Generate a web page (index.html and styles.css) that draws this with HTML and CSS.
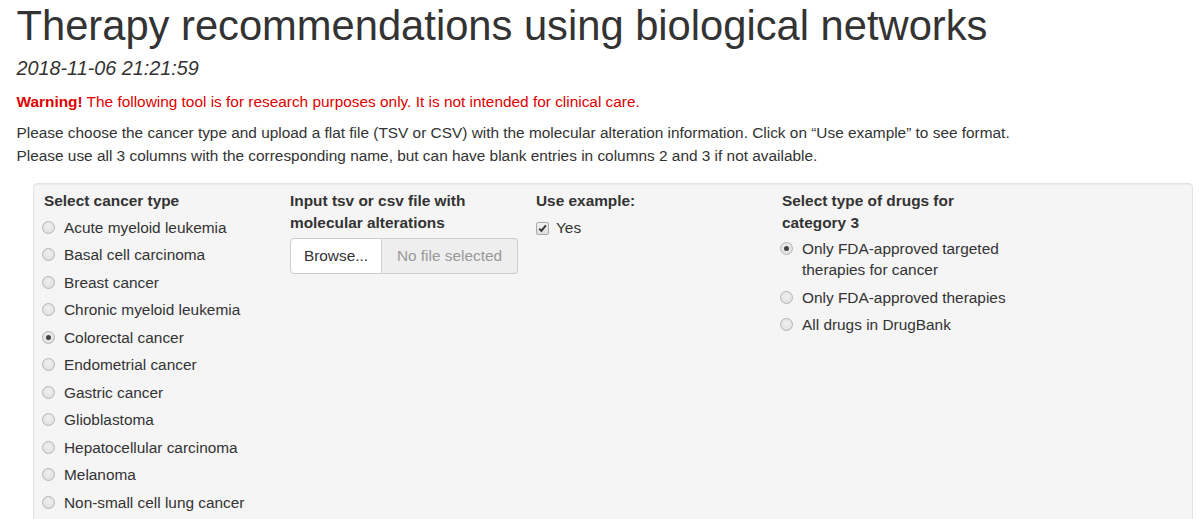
FILE: index.html
```html
<!DOCTYPE html>
<html lang="en">
<head>
<meta charset="utf-8">
<title>Therapy recommendations using biological networks</title>
<link rel="stylesheet" href="styles.css">
</head>
<body>
<div class="page">
  <h1 class="title">Therapy recommendations using biological networks</h1>
  <h4 class="date">2018-11-06 21:21:59</h4>
  <p class="warning"><strong>Warning!</strong> The following tool is for research purposes only. It is not intended for clinical care.</p>
  <p class="intro">Please choose the cancer type and upload a flat file (TSV or CSV) with the molecular alteration information. Click on “Use example” to see format.<br>Please use all 3 columns with the corresponding name, but can have blank entries in columns 2 and 3 if not available.</p>
  <div class="well">
    <div class="cols">
      <div class="col">
        <div class="label">Select cancer type</div>
        <div class="opt"><span class="radio"></span>Acute myeloid leukemia</div>
        <div class="opt"><span class="radio"></span>Basal cell carcinoma</div>
        <div class="opt"><span class="radio"></span>Breast cancer</div>
        <div class="opt"><span class="radio"></span>Chronic myeloid leukemia</div>
        <div class="opt"><span class="radio checked"></span>Colorectal cancer</div>
        <div class="opt"><span class="radio"></span>Endometrial cancer</div>
        <div class="opt"><span class="radio"></span>Gastric cancer</div>
        <div class="opt"><span class="radio"></span>Glioblastoma</div>
        <div class="opt"><span class="radio"></span>Hepatocellular carcinoma</div>
        <div class="opt"><span class="radio"></span>Melanoma</div>
        <div class="opt"><span class="radio"></span>Non-small cell lung cancer</div>
      </div>
      <div class="col">
        <div class="label">Input tsv or csv file with molecular alterations</div>
        <div class="file">
          <span class="browse">Browse...</span>
          <span class="filename">No file selected</span>
        </div>
      </div>
      <div class="col">
        <div class="label">Use example:</div>
        <div class="opt"><span class="check"><svg width="9" height="9" viewBox="0 0 9 9"><path d="M1.2 4.6 L3.4 6.9 L7.9 1.3" fill="none" stroke="#333" stroke-width="1.9"/></svg></span>Yes</div>
      </div>
      <div class="col">
        <div class="label">Select type of drugs for category 3</div>
        <div class="opt"><span class="radio checked"></span><span>Only FDA-approved targeted therapies for cancer</span></div>
        <div class="opt"><span class="radio"></span>Only FDA-approved therapies</div>
        <div class="opt"><span class="radio"></span>All drugs in DrugBank</div>
      </div>
    </div>
  </div>
</div>
</body>
</html>
```
FILE: styles.css
```css
html, body {
  margin: 0;
  padding: 0;
  background: #fff;
}
body {
  font-family: "Liberation Sans", Arial, sans-serif;
  font-size: 15.4px;
  line-height: 22px;
  color: #333;
  overflow: hidden;
}
.page {
  padding: 0 16.5px;
}
.title {
  font-size: 41.7px;
  font-weight: normal;
  line-height: 44px;
  margin: 4px 0 0 0;
  color: #333;
}
.date {
  font-size: 19.8px;
  font-style: italic;
  font-weight: normal;
  line-height: 22px;
  margin: 9px 0 0 0;
}
.warning {
  color: #e00000;
  margin: 12px 0 0 0;
}
.warning strong {
  font-weight: bold;
}
.intro {
  margin: 8px 0 0 0;
  line-height: 23px;
}
.well {
  margin: 16px -9px 0 16.5px;
  background: #f5f5f5;
  border: 1px solid #e3e3e3;
  border-radius: 4px;
  box-shadow: inset 0 1px 1px rgba(0,0,0,0.05);
  padding: 6px 10px 10px 10px;
  height: 400px;
}
.cols {
  display: grid;
  grid-template-columns: 216px 216px 216px 236px;
  column-gap: 30px;
}
.label {
  font-weight: bold;
  line-height: 21.5px;
  margin-bottom: 5px;
}
.opt {
  display: flex;
  align-items: flex-start;
  line-height: 21px;
  margin-bottom: 6.5px;
  padding-left: 20px;
  position: relative;
}
.radio {
  position: absolute;
  left: -2px;
  top: 4px;
  width: 11px;
  height: 11px;
  border: 1px solid #b5b5b5;
  border-radius: 50%;
  background: radial-gradient(circle at 50% 40%, #f0f0f0 0%, #dcdcdc 100%);
  box-sizing: content-box;
}
.radio.checked::after {
  content: "";
  position: absolute;
  left: 3px;
  top: 3px;
  width: 5px;
  height: 5px;
  border-radius: 50%;
  background: #444;
}
.check {
  position: absolute;
  left: 0;
  top: 5px;
  width: 11px;
  height: 11px;
  border: 1px solid #a9a9a9;
  border-radius: 2px;
  background: linear-gradient(#f2f2f2, #dedede);
  display: flex;
  align-items: center;
  justify-content: center;
}
.file {
  display: flex;
  height: 36px;
  margin-top: 1px;
}
.browse {
  flex: 0 0 auto;
  display: flex;
  align-items: center;
  justify-content: center;
  width: 90px;
  background: #fff;
  border: 1px solid #ccc;
  border-radius: 4px 0 0 4px;
  color: #333;
}
.filename {
  flex: 0 0 auto;
  display: flex;
  align-items: center;
  justify-content: center;
  width: 135px;
  background: #eee;
  border: 1px solid #ccc;
  border-left: none;
  border-radius: 0 4px 4px 0;
  color: #999;
}
```
